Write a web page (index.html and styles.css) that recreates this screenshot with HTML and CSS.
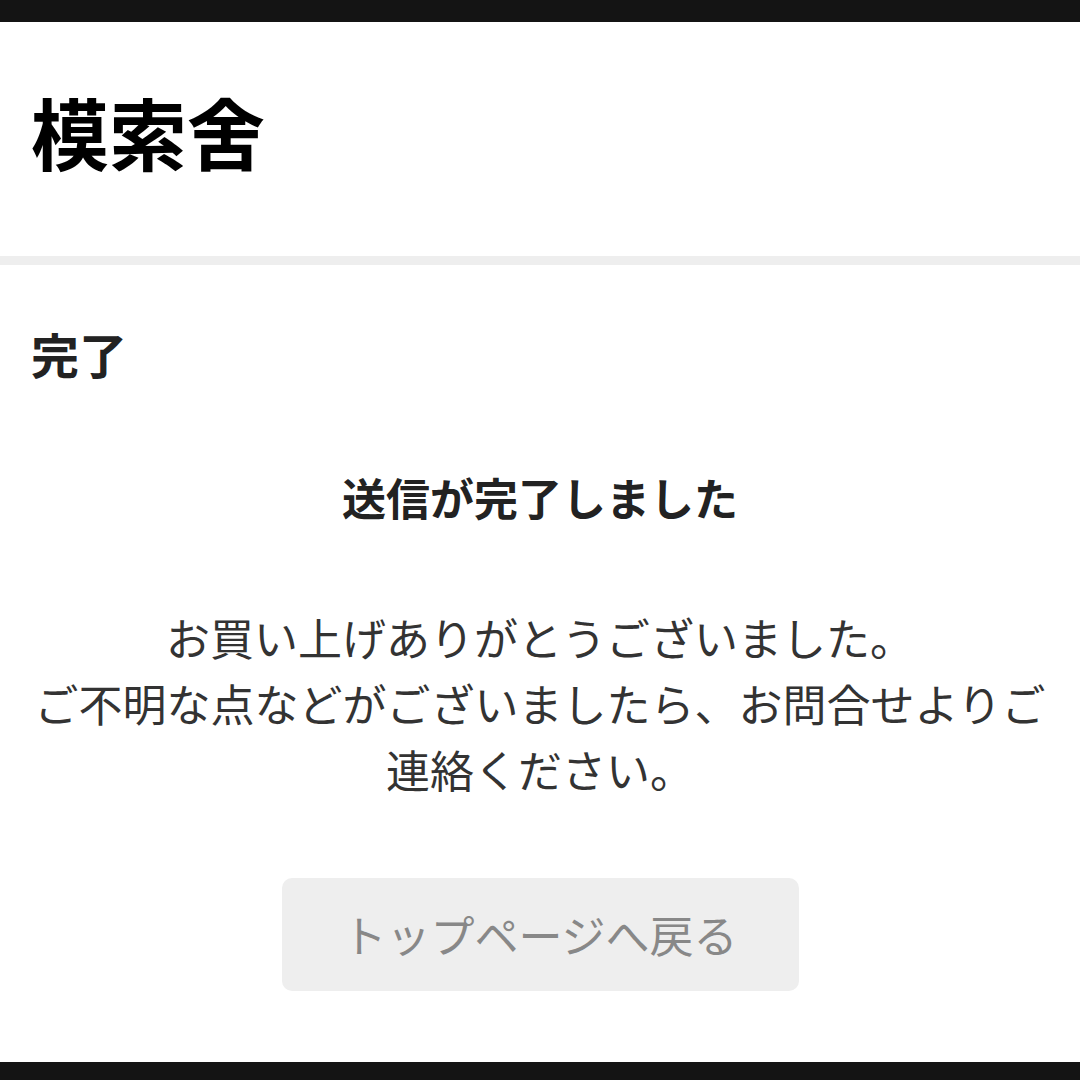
FILE: index.html
```html
<!DOCTYPE html>
<html lang="ja">
<head>
<meta charset="utf-8">
<title>完了 | 模索舍</title>
<link rel="stylesheet" href="styles.css">
</head>
<body>
<div class="topbar"></div>
<header class="site-header">
  <h1 class="logo">模索舍</h1>
</header>
<div class="divider"></div>
<main class="content">
  <h2 class="page-title">完了</h2>
  <h3 class="done-title">送信が完了しました</h3>
  <p class="message">お買い上げありがとうございました。<br>ご不明な点などがございましたら、お問合せよりご連絡ください。</p>
  <div class="actions">
    <a class="back-btn" href="#">トップページへ戻る</a>
  </div>
</main>
<footer class="bottombar"></footer>
</body>
</html>
```

FILE: styles.css
```css
* { box-sizing: border-box; }
html, body {
  margin: 0;
  padding: 0;
  background: #fff;
  font-family: "Noto Sans CJK JP", "Noto Sans", sans-serif;
  color: #333;
  overflow: hidden;
}
.topbar {
  height: 22px;
  background: #141414;
}
.site-header {
  height: 234px;
  padding-left: 31px;
  padding-bottom: 16px;
  display: flex;
  align-items: center;
}
.logo {
  margin: 0;
  font-size: 78px;
  line-height: 1;
  font-weight: 700;
  color: #000;
  letter-spacing: 0;
}
.divider {
  height: 9px;
  background: #eeeeee;
}
.content {
  display: flow-root;
  padding: 0 31px;
  height: 797px;
}
.page-title {
  margin: 52px 0 0;
  font-size: 48px;
  line-height: 72px;
  font-weight: 700;
  color: #222;
}
.done-title {
  margin: 75px 0 0;
  text-align: center;
  font-size: 44px;
  line-height: 66px;
  font-weight: 700;
  color: #222;
}
.message {
  margin: 74px 0 0;
  text-align: center;
  font-size: 44px;
  line-height: 66px;
  color: #333;
}
.actions {
  display: flex;
  justify-content: center;
  margin-top: 76px;
}
.back-btn {
  display: block;
  width: 517px;
  height: 113px;
  line-height: 113px;
  text-align: center;
  background: #eeeeee;
  border-radius: 10px;
  color: #888;
  font-size: 44px;
  text-decoration: none;
}
.bottombar {
  height: 60px;
  background: #141414;
}
```
